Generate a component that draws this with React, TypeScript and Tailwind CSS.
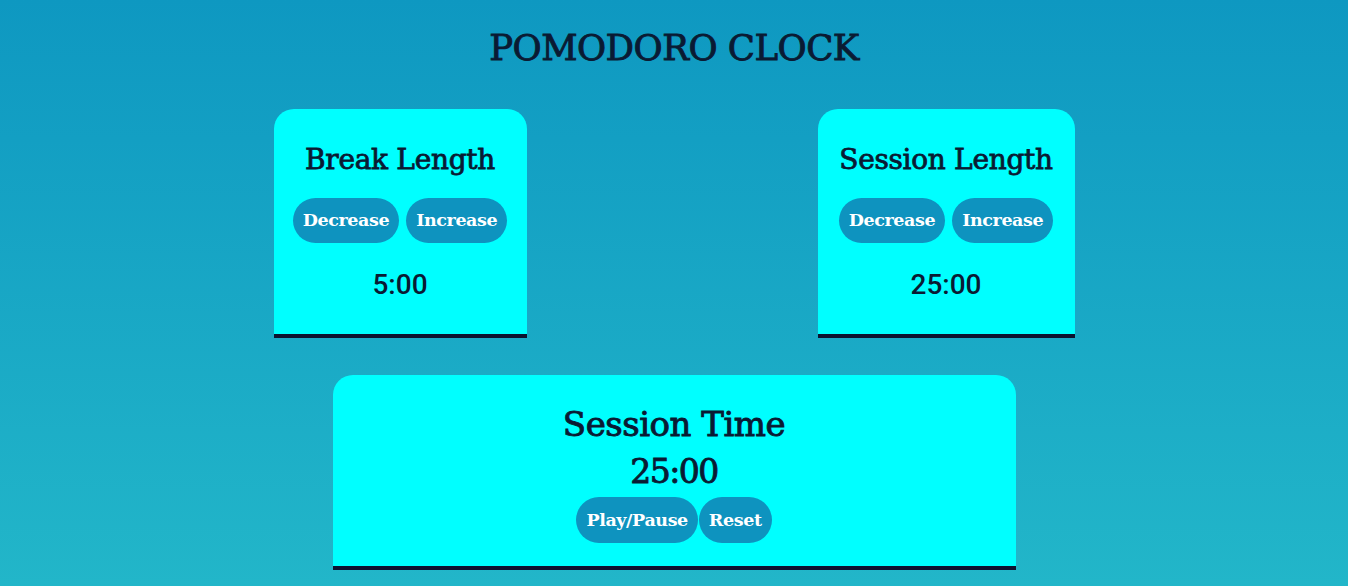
import React from "react";

const slab = "[font-family:'DejaVu_Serif','Liberation_Serif',serif]";

function Btn({ children, h = "h-[45px]" }: { children: React.ReactNode; h?: string }) {
  return (
    <button
      className={`${h} px-[10px] rounded-full bg-[#0e93bf] text-white font-bold text-[17.5px] ${slab} tracking-[-0.4px]`}
    >
      {children}
    </button>
  );
}

function LengthCard({ title, value, w }: { title: string; value: string; w: string }) {
  return (
    <div className={`${w} flex flex-col items-center bg-[#00ffff] rounded-t-[20px] border-b-4 border-[#0c1330] pt-[33px] pb-[31px]`}>
      <h2 className={`${slab} text-[28px] leading-[36px] text-[#0a1a33] whitespace-nowrap tracking-[-0.3px] [-webkit-text-stroke:0.8px_#0a1a33]`}>{title}</h2>
      <div className="flex gap-[7px] mt-5">
        <Btn>Decrease</Btn>
        <Btn>Increase</Btn>
      </div>
      <div className="mt-6 text-[28px] leading-[36px] font-medium text-[#0a1a33] [font-family:Roboto,sans-serif]">
        {value}
      </div>
    </div>
  );
}

export default function App() {
  return (
    <div className="min-h-[586px] w-full bg-gradient-to-b from-[#0e98c1] to-[#22b6c9] flex flex-col items-center">
      <h1 className={`${slab} text-[35.5px] leading-[48px] mt-6 text-[#0a1a33] tracking-[-0.5px] [-webkit-text-stroke:0.9px_#0a1a33]`}>POMODORO CLOCK</h1>
      <div className="flex gap-[291px] mt-[37px]">
        <LengthCard title="Break Length" value="5:00" w="w-[253px]" />
        <LengthCard title="Session Length" value="25:00" w="w-[257px]" />
      </div>
      <div className="mt-[37px] w-[683px] flex flex-col items-center bg-[#00ffff] rounded-t-[20px] border-b-4 border-[#0c1330] pt-[29px] pb-[23px]">
        <h2 className={`${slab} text-[34px] leading-[40px] text-[#0a1a33] tracking-[-0.5px] [-webkit-text-stroke:0.9px_#0a1a33]`}>Session Time</h2>
        <div className={`${slab} text-[33px] leading-[44px] mt-[6px] text-[#0a1a33] tracking-[-1.5px] [-webkit-text-stroke:0.9px_#0a1a33]`}>25:00</div>
        <div className="flex gap-[1px] mt-[3px]">
          <Btn h="h-[46px]">Play/Pause</Btn>
          <Btn h="h-[46px]">Reset</Btn>
        </div>
      </div>
    </div>
  );
}
